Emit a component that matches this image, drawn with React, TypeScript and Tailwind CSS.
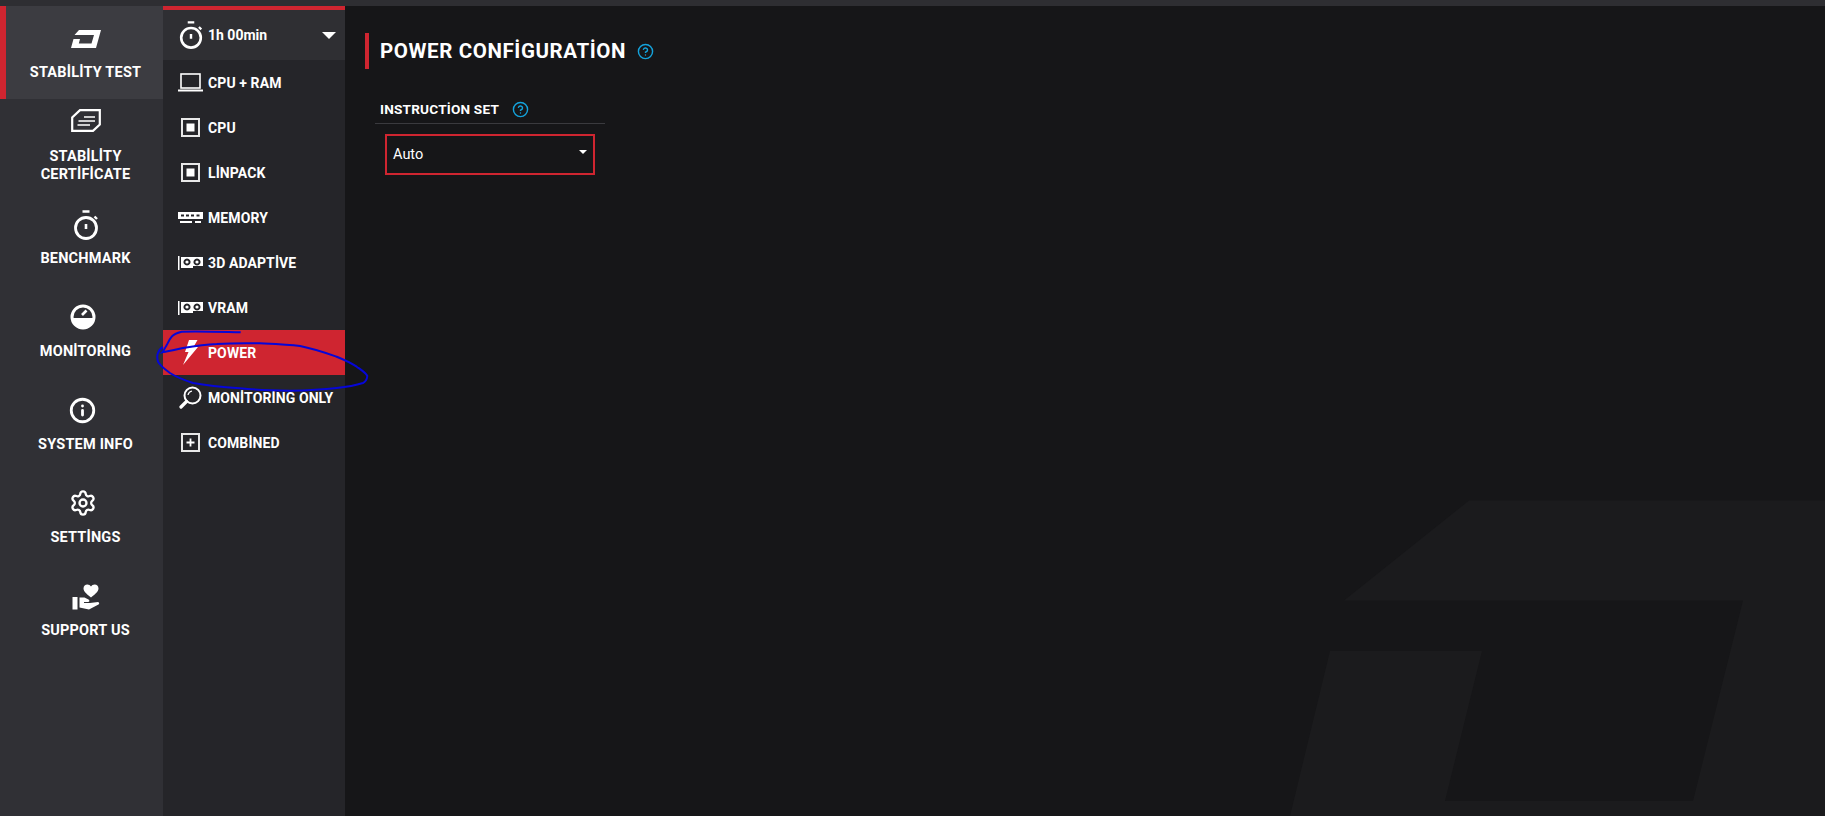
import type { ReactNode } from 'react'
import { CircleHelp, Info, Settings } from 'lucide-react'

function Logo() {
  return (
    <svg width="30" height="18" viewBox="0 0 30 18" fill="white">
      <path fillRule="evenodd" d="M8 0H30L25 18H0L2.5 9H9L7.8 13.5H20.5L23 5H3.5Z" />
    </svg>
  )
}

function Certificate() {
  return (
    <svg width="30" height="23" viewBox="0 0 30 23" fill="none" stroke="white">
      <path strokeWidth="2.2" d="M9 1.2H28.8V15.5L22 21.8H1.2V8.5Z" />
      <path strokeWidth="1.6" d="M13 8H24M7.5 12H24M6.5 16H19" />
    </svg>
  )
}

function Stopwatch({ size }: { size: number }) {
  return (
    <svg width={size} height={size} viewBox="0 0 26 30" fill="none" stroke="white">
      <circle cx="13" cy="18" r="10.5" strokeWidth="2.8" />
      <path strokeWidth="2.6" d="M9.5 1.5H16.5M13 14V19" />
      <path strokeWidth="2.4" d="M21.5 6.5L24 9" />
    </svg>
  )
}

function Gauge() {
  return (
    <svg width="26" height="26" viewBox="0 0 26 26">
      <circle cx="13" cy="13" r="11" fill="none" stroke="white" strokeWidth="3" />
      <path fill="white" d="M2 14H24A11 11 0 0 1 2 14Z" />
      <path stroke="white" strokeWidth="2.6" d="M12 11L16.5 6.5" />
    </svg>
  )
}

function HandHeart() {
  return (
    <svg width="28" height="26" viewBox="0 0 28 26" fill="white">
      <path d="M19 13.5C16 11 11.5 7.8 11.5 4.5C11.5 2 13.3 0.5 15.3 0.5C17 0.5 18.2 1.4 19 2.6C19.8 1.4 21 0.5 22.7 0.5C24.7 0.5 26.5 2 26.5 4.5C26.5 7.8 22 11 19 13.5Z" />
      <rect x="0.5" y="13" width="5" height="12.5" />
      <path d="M7.5 13.5H12.5L16.5 15.5C18 16.5 17.5 18 16 18H12V19H18L26 18C27.5 18.5 27.5 20 26.5 20.5L17 25.5L7.5 23.5Z" />
    </svg>
  )
}

function Laptop() {
  return (
    <svg width="25" height="19" viewBox="0 0 25 19" fill="none" stroke="white">
      <rect x="3" y="1" width="19" height="14" strokeWidth="1.6" />
      <path strokeWidth="2" d="M0 17.5H25" />
    </svg>
  )
}

function Chip({ plus }: { plus?: boolean }) {
  return (
    <svg width="19" height="19" viewBox="0 0 19 19">
      <rect x="1" y="1" width="17" height="17" fill="none" stroke="#e8e8e8" strokeWidth="2" />
      {plus ? (
        <path stroke="white" strokeWidth="1.8" d="M9.5 5.5V13.5M5.5 9.5H13.5" />
      ) : (
        <rect x="5.5" y="5.5" width="8" height="8" fill="white" />
      )}
    </svg>
  )
}

function Memory() {
  return (
    <svg width="25" height="11" viewBox="0 0 25 11" fill="white">
      <path
        fillRule="evenodd"
        d="M0 0H25V7H0ZM3 2.5V4.5H6V2.5ZM8 2.5V4.5H11V2.5ZM13 2.5V4.5H16V2.5ZM18.500 2.5V4.5H21.500V2.5Z"
      />
      <rect x="2" y="9" width="12" height="2" />
      <rect x="17" y="9" width="6" height="2" />
    </svg>
  )
}

function Gpu() {
  return (
    <svg width="25" height="14" viewBox="0 0 25 14" fill="white">
      <rect x="0" y="0" width="1.5" height="14" />
      <path
        fillRule="evenodd"
        d="M3 1H25V10H15V12H3ZM9 2.500A3.500 3.500 0 1 0 9.010 2.500ZM19 2.500A3.500 3.500 0 1 0 19.010 2.500Z"
      />
      <circle cx="9" cy="6" r="1.6" />
      <circle cx="19" cy="6" r="1.6" />
    </svg>
  )
}

function Bolt() {
  return (
    <svg width="15" height="25" viewBox="0 0 15 25" fill="white">
      <path d="M6 0H14.500L10.500 7H15L0 25L5.500 12H2Z" />
    </svg>
  )
}

function Lens() {
  return (
    <svg width="23" height="23" viewBox="0 0 23 23" fill="none" stroke="white">
      <circle cx="13.5" cy="9.500" r="8" strokeWidth="2" />
      <path strokeWidth="3.2" strokeLinecap="round" d="M7.500 15.500L2 21" />
      <path strokeWidth="1.2" d="M9 9A5 5 0 0 1 13 5" />
    </svg>
  )
}

interface RailItem {
  label: ReactNode
  icon: ReactNode
  active?: boolean
  twoLine?: boolean
  shift?: boolean
}

const railItems: RailItem[] = [
  { label: 'STABİLİTY TEST', icon: <Logo />, active: true },
  {
    label: (
      <>
        STABİLİTY
        <br />
        CERTİFİCATE
      </>
    ),
    icon: <Certificate />,
    twoLine: true,
  },
  { label: 'BENCHMARK', icon: <Stopwatch size={30} /> },
  { label: 'MONİTORİNG', icon: <Gauge />, shift: true },
  { label: 'SYSTEM INFO', icon: <Info size={27} color="white" strokeWidth={2.5} />, shift: true },
  { label: 'SETTİNGS', icon: <Settings size={28} color="white" strokeWidth={2} />, shift: true },
  { label: 'SUPPORT US', icon: <HandHeart /> },
]

const testRows = [
  { label: 'CPU + RAM', icon: <Laptop /> },
  { label: 'CPU', icon: <Chip /> },
  { label: 'LİNPACK', icon: <Chip /> },
  { label: 'MEMORY', icon: <Memory /> },
  { label: '3D ADAPTİVE', icon: <Gpu /> },
  { label: 'VRAM', icon: <Gpu /> },
  { label: 'POWER', icon: <Bolt />, active: true },
  { label: 'MONİTORİNG ONLY', icon: <Lens /> },
  { label: 'COMBİNED', icon: <Chip plus /> },
]

export default function App() {
  return (
    <div className="relative flex h-[816px] w-[1825px] flex-col overflow-hidden bg-[#161618] font-['Roboto',sans-serif] text-white">
      <div className="h-[6px] shrink-0 bg-[#2e2e32]" />

      <div className="flex min-h-0 flex-1">
        <nav className="w-[163px] shrink-0 bg-[#303035]">
          {railItems.map((item, i) => (
            <div
              key={i}
              className={`flex h-[93px] flex-col items-center ${item.twoLine ? 'pt-[7px]' : 'pt-[19px]'} ${
                item.active ? 'border-l-[6px] border-[#cf2530] bg-[#3c3c41] pl-[2px]' : 'pl-[8px]'
              }`}
            >
              <div className={`flex h-[28px] items-center justify-center ${item.shift ? 'pr-[6px] pb-[2px]' : ''}`}>
                {item.icon}
              </div>
              <div
                className={`${item.twoLine ? 'mt-[14px]' : 'mt-[11px]'} text-center text-[14.5px] leading-[18px] font-bold tracking-[0.2px] whitespace-nowrap`}
              >
                {item.label}
              </div>
            </div>
          ))}
        </nav>

        <aside className="w-[182px] shrink-0 bg-[#252529]">
          <div className="h-[4px] bg-[#cf2530]" />
          <div className="flex h-[50px] items-center bg-[#2f2f33] pr-[9px]">
            <div className="flex w-[45px] justify-center pl-[10px]">
              <Stopwatch size={28} />
            </div>
            <span className="flex-1 pt-[1px] text-[14px] font-bold">1h 00min</span>
            <div className="h-0 w-0 border-x-[7px] border-t-[7px] border-x-transparent border-t-white" />
          </div>
          {testRows.map((row) => (
            <div
              key={row.label}
              className={`flex h-[45px] items-center ${row.active ? 'bg-[#cf2530]' : ''}`}
            >
              <div className="flex w-[45px] justify-center pl-[10px]">{row.icon}</div>
              <span className="pt-[2px] text-[14px] font-bold tracking-[0.1px] whitespace-nowrap">{row.label}</span>
            </div>
          ))}
        </aside>

        <main className="relative flex-1 pt-[27px] pl-[20px]">
          <svg
            className="absolute top-0 left-0"
            width="1480"
            height="810"
            viewBox="345 6 1480 810"
            fill="#1b1b1d"
          >
            <path d="M1469 500.500H1825V816H1290L1330 651H1482L1445 801H1693L1743 600.500H1344Z" />
          </svg>

          <div className="relative">
            <div className="flex h-[36px] items-center border-l-[4px] border-[#cf2530] pl-[11px]">
              <h1 className="text-[20.5px] font-bold tracking-[0.6px]">POWER CONFİGURATİON</h1>
              <CircleHelp size={17} color="#14a3dc" strokeWidth={2} className="ml-[11px]" />
            </div>

            <div className="mt-[28px] w-[240px] pl-[10px]">
              <div className="flex h-[27px] items-center border-b border-[#3a3a3e] pb-[2px] pl-[5px]">
                <span className="text-[13.6px] font-bold tracking-[0.2px]">INSTRUCTİON SET</span>
                <CircleHelp size={17} color="#14a3dc" strokeWidth={2} className="ml-[13px]" />
              </div>
              <div className="mt-[10px] ml-[10px] flex h-[41px] w-[210px] items-center justify-between border-2 border-[#cf2530] px-[6px]">
                <span className="pt-[1px] text-[14.5px]">Auto</span>
                <div className="mb-[6px] h-0 w-0 border-x-[4px] border-t-[4px] border-x-transparent border-t-white" />
              </div>
            </div>
          </div>
        </main>
      </div>

      {/* pen annotation drawn over the screenshot */}
      <svg className="pointer-events-none absolute top-0 left-0" width="1825" height="816" fill="none" stroke="#0606d8" strokeWidth="2">
        <path d="M240.700 332.300C225 332 200 331 181.700 331.700C176 333 173 335 171.700 336.700C169 340 168 343 166.700 345C165 348 163.500 351 162.300 352.300C170 351 176 349.500 183 348C195 346 205 344.500 216.700 344C232 343 246 343 260 343.300C275 344 288 344.500 300 346C315 349 326 353 336.700 356.700C345 360 352 363.500 356.700 366.700C362 370.500 366 373 367.300 376C367 379 366 381.500 363 383C355 385.500 346 387 336.700 388C320 390 305 390.500 290 390.700C272 390.500 256 390 240 388.300C222 387 207 385.500 193 383C184 380 176 377 170 373C165 369.500 160 366 158 361.700C157 358 157 355 158 353C159 350 161 348 163 347" />
      </svg>
    </div>
  )
}
